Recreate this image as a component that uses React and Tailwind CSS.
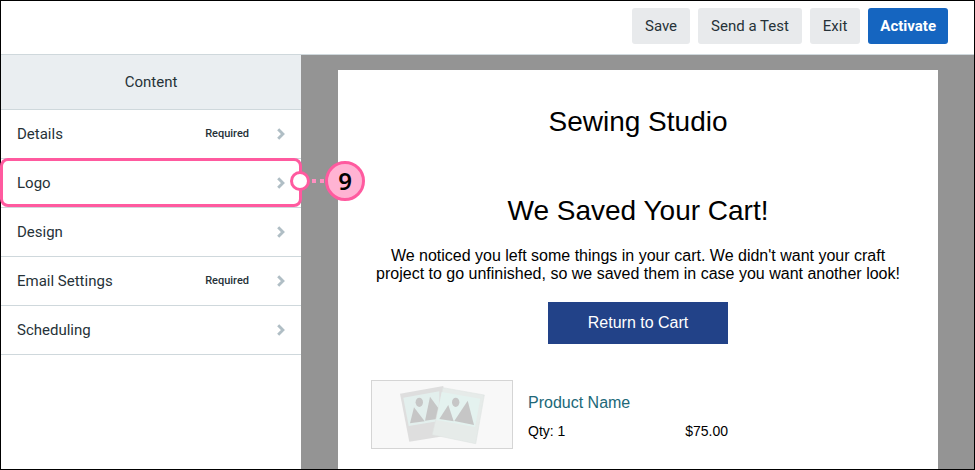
import React from 'react';

const sections = [
  { id: 'details', label: 'Details', required: true },
  { id: 'logo', label: 'Logo', step: 9 },
  { id: 'design', label: 'Design' },
  { id: 'email', label: 'Email Settings', required: true },
  { id: 'scheduling', label: 'Scheduling' },
];

const Chevron = () => (
  <svg width="8" height="12" viewBox="0 0 8 12" fill="none" aria-hidden="true">
    <path d="M1.2 1.2L5.9 6L1.2 10.8" stroke="#b0bec5" strokeWidth="2.9" />
  </svg>
);

// Outline around a row, with a dotted lead to the numbered badge
const StepMarker = ({ number }) => (
  <div className="absolute -inset-x-px -top-px bottom-px z-10 pointer-events-none rounded-lg border-3 border-[#ff5a9f]">
    <div className="absolute left-full top-0 flex items-center">
      <span className="-ml-[9px] size-5 shrink-0 rounded-full border-3 border-[#ff5a9f] bg-white" />
      <span className="ml-0.5 size-1 shrink-0 bg-[#ff8fc0]" />
      <span className="ml-1 size-1 shrink-0 bg-[#ff8fc0]" />
      <span className="ml-px flex size-10 shrink-0 items-center justify-center rounded-full border-3 border-[#ff5a9f] bg-[#ffb3d3] font-['Noto_Sans',sans-serif] text-2xl font-semibold text-black">
        {number}
      </span>
    </div>
  </div>
);

const Toolbar = () => (
  <header className="flex h-[54px] items-start justify-end gap-2 border-b border-[#cfd8dc] bg-white pt-[7px] pr-[26px]">
    <button className="h-9 rounded-[3px] bg-[#e8eaec] px-[13px]">Save</button>
    <button className="h-9 rounded-[3px] bg-[#e8eaec] px-[13px]">Send a Test</button>
    <button className="h-9 rounded-[3px] bg-[#e8eaec] px-[13px]">Exit</button>
    <button className="h-9 rounded-[3px] bg-[#1565c0] px-3 font-bold text-white">Activate</button>
  </header>
);

const Sidebar = () => (
  <aside className="w-[300px] shrink-0 bg-white">
    <h2 className="flex h-[55px] items-center justify-center border-b border-[#cfd8dc] bg-[#eaeef1]">
      Content
    </h2>
    <ul>
      {sections.map(s => (
        <li key={s.id} className="relative">
          <button className="flex h-[49px] w-full items-center border-b border-[#cfd8dc] px-4 text-left">
            <span className="flex-1">{s.label}</span>
            {s.required && <span className="mr-7 text-[11px] font-medium">Required</span>}
            <Chevron />
          </button>
          {s.step && <StepMarker number={s.step} />}
        </li>
      ))}
    </ul>
  </aside>
);

// Two overlapping instant photos, the right one on top
const ProductImage = () => (
  <svg width="86" height="61" viewBox="0 0 86 61" role="img" aria-label="Product photo">
    <path d="M1 9.7L44.3 2L46 52L10.3 57.7Z" fill="#dedede" />
    <path d="M4.3 13.7L40.3 7.3L40 37L9.7 42Z" fill="#e3efed" />
    <ellipse cx="20.3" cy="18.3" rx="3.7" ry="4.6" fill="#c6c6c6" />
    <path d="M15 23.3L11 39.3L25.7 37.3Z" fill="#c6c6c6" />
    <path d="M31 12.7L26 36.7L38 35L40 25Z" fill="#c6c6c6" />
    <path d="M44 3.7L85.3 11L76.7 59.7L33.3 50.7Z" fill="#e6ebe9" stroke="#dfe4e2" strokeWidth="0.6" />
    <path d="M42.7 8L81.3 14.7L76 43L37.3 36Z" fill="#e4f2ef" />
    <ellipse cx="56.7" cy="18.3" rx="3.7" ry="4.6" fill="#c6c6c6" />
    <path d="M49.3 21L40.3 35L54.7 37.3Z" fill="#c6c6c6" />
    <path d="M68.7 16.7L55.3 37L75 41Z" fill="#c6c6c6" />
  </svg>
);

const EmailPreview = () => (
  <article className="flex-1 bg-white px-8 pt-9 pb-5 font-['Liberation_Sans',Arial,sans-serif] text-base text-black">
    <div className="text-center">
      <h1 className="text-[28px] leading-8">Sewing Studio</h1>
      <h2 className="mt-[57px] text-[28px] leading-8">We Saved Your Cart!</h2>
      <p className="mt-5 leading-[18px]">
        We noticed you left some things in your cart. We didn't want your craft project to go
        unfinished, so we saved them in case you want another look!
      </p>
      <a href="#cart" className="mt-[19px] inline-block bg-[#224288] px-10 leading-[42px] text-white">
        Return to Cart
      </a>
    </div>
    <div className="mt-9 flex gap-[15px] px-px">
      <div className="flex h-[69px] w-[142px] shrink-0 items-center justify-center border border-[#d5d5d5] bg-[#f8f8f8]">
        <ProductImage />
      </div>
      <div className="w-[200px] pt-[13px]">
        <a href="#product" className="block leading-5 text-[#216878]">Product Name</a>
        <div className="mt-2 flex justify-between text-sm">
          <span>Qty: 1</span>
          <span>$75.00</span>
        </div>
      </div>
    </div>
  </article>
);

const App = () => (
  <div className="flex min-h-screen flex-col border border-black font-['Roboto',sans-serif] text-[15px] text-[#263238]">
    <Toolbar />
    <div className="flex flex-1">
      <Sidebar />
      <main className="flex flex-1 bg-[#949494] pt-[15px] pr-9 pl-[37px]">
        <EmailPreview />
      </main>
    </div>
  </div>
);

export default App;
